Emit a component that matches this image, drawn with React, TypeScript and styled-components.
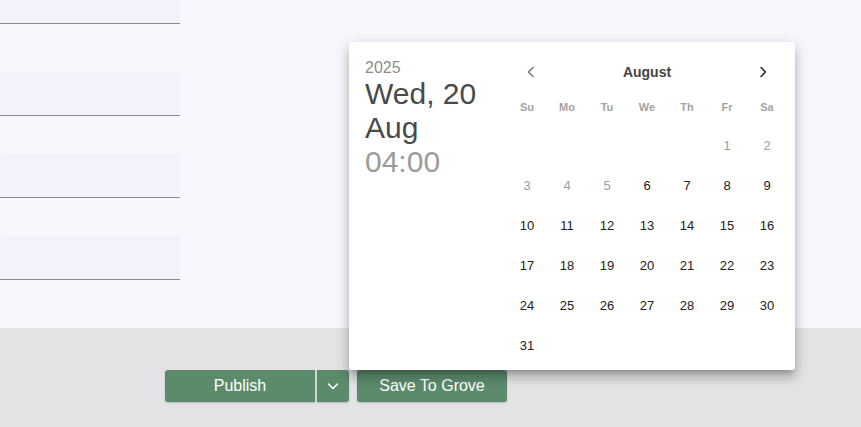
import React from "react";
import styled, { createGlobalStyle } from "styled-components";

const GlobalStyle = createGlobalStyle`
  html, body {
    margin: 0;
    padding: 0;
    background: #f7f8fe;
    font-family: "Liberation Sans", Arial, sans-serif;
  }
`;

const YEAR = 2025;
const MONTH_NAME = "August";
const FIRST_WEEKDAY = 5; // 1 Aug 2025 is a Friday
const DAYS_IN_MONTH = 31;
const FIRST_ENABLED = 6;
const WEEKDAYS = ["Su", "Mo", "Tu", "We", "Th", "Fr", "Sa"];

const Chevron = ({ dir, color }: { dir: "left" | "right" | "down"; color: string }) => {
  const d =
    dir === "left"
      ? "M9 2.5 L4.5 7 L9 11.5"
      : dir === "right"
      ? "M5 2.5 L9.5 7 L5 11.5"
      : "M2.5 5 L7 9.5 L11.5 5";
  return (
    <svg width="14" height="14" viewBox="0 0 14 14" fill="none">
      <path d={d} stroke={color} strokeWidth="1.6" strokeLinecap="round" strokeLinejoin="round" />
    </svg>
  );
};

export default function App() {
  const cells: (number | null)[] = [];
  for (let i = 0; i < FIRST_WEEKDAY; i++) cells.push(null);
  for (let d = 1; d <= DAYS_IN_MONTH; d++) cells.push(d);

  return (
    <>
      <GlobalStyle />
      <Page>
        <Main>
          <FieldColumn>
            <Field $first />
            <Field />
            <Field />
            <Field />
          </FieldColumn>
        </Main>
        <Footer>
          <SplitButton>
            <PublishButton>Publish</PublishButton>
            <MenuButton>
              <Chevron dir="down" color="#ffffff" />
            </MenuButton>
          </SplitButton>
          <SaveButton>Save To Grove</SaveButton>
        </Footer>

        <Popup>
          <DateSide>
            <Year>{YEAR}</Year>
            <DateLine>Wed, 20</DateLine>
            <DateLine>Aug</DateLine>
            <TimeLine>04:00</TimeLine>
          </DateSide>
          <Calendar>
            <MonthHeader>
              <NavButton>
                <Chevron dir="left" color="#7a7a7a" />
              </NavButton>
              <MonthName>{MONTH_NAME}</MonthName>
              <NavButton>
                <Chevron dir="right" color="#333333" />
              </NavButton>
            </MonthHeader>
            <Grid>
              {WEEKDAYS.map((w) => (
                <Weekday key={w}>{w}</Weekday>
              ))}
            </Grid>
            <DayGrid>
              {cells.map((d, i) => (
                <Day key={i} $disabled={d !== null && d < FIRST_ENABLED}>
                  {d ?? ""}
                </Day>
              ))}
            </DayGrid>
          </Calendar>
        </Popup>
      </Page>
    </>
  );
}

const Page = styled.div`
  position: relative;
  width: 861px;
  height: 427px;
  overflow: hidden;
  display: flex;
  flex-direction: column;
`;

const Main = styled.div`
  height: 328px;
  background: #f7f8fe;
`;

const FieldColumn = styled.div`
  display: flex;
  flex-direction: column;
  gap: 38px;
  width: 180px;
`;

const Field = styled.div<{ $first?: boolean }>`
  height: 43px;
  background: #f1f2fc;
  border-bottom: 1px solid #8a8a94;
  border-radius: 4px 4px 0 0;
  margin-top: ${({ $first }) => ($first ? "-20px" : "0")};
  margin-bottom: ${({ $first }) => ($first ? "10px" : "0")};
`;

const Footer = styled.div`
  flex: 1;
  background: #e3e3e6;
  display: flex;
  align-items: flex-start;
  gap: 8px;
  padding: 42px 0 0 165px;
`;

const SplitButton = styled.div`
  display: flex;
  gap: 2px;
`;

const GreenButton = styled.button`
  height: 32px;
  border: none;
  background: #5c8b6c;
  color: #ffffff;
  font-family: "Liberation Sans", Arial, sans-serif;
  font-size: 16px;
  display: flex;
  align-items: center;
  justify-content: center;
  padding: 0;
  box-shadow: 0 1px 2px rgba(0, 0, 0, 0.2);
  cursor: pointer;
`;

const PublishButton = styled(GreenButton)`
  width: 150px;
  border-radius: 3px 0 0 3px;
`;

const MenuButton = styled(GreenButton)`
  width: 32px;
  border-radius: 0 3px 3px 0;
`;

const SaveButton = styled(GreenButton)`
  width: 150px;
  border-radius: 3px;
`;

const Popup = styled.div`
  position: absolute;
  left: 349px;
  top: 42px;
  width: 446px;
  height: 328px;
  background: #ffffff;
  border-radius: 3px;
  box-shadow: 0 5px 5px -3px rgba(0, 0, 0, 0.2), 0 8px 10px 1px rgba(0, 0, 0, 0.14),
    0 3px 14px 2px rgba(0, 0, 0, 0.12);
  display: flex;
`;

const DateSide = styled.div`
  width: 158px;
  box-sizing: border-box;
  padding: 16px 0 0 16px;
  display: flex;
  flex-direction: column;
`;

const Year = styled.div`
  font-size: 16px;
  line-height: 19px;
  color: #8c8c8c;
`;

const DateLine = styled.div`
  font-size: 30px;
  line-height: 34px;
  color: #4a4a4a;
`;

const TimeLine = styled(DateLine)`
  color: #9b9b9b;
`;

const Calendar = styled.div`
  width: 280px;
  padding-top: 10px;
  display: flex;
  flex-direction: column;
`;

const MonthHeader = styled.div`
  height: 40px;
  display: flex;
  align-items: center;
  justify-content: space-between;
  padding: 0 17px;
`;

const NavButton = styled.div`
  width: 14px;
  height: 14px;
  display: flex;
  align-items: center;
  justify-content: center;
`;

const MonthName = styled.div`
  font-size: 14px;
  font-weight: bold;
  color: #444444;
`;

const Grid = styled.div`
  display: grid;
  grid-template-columns: repeat(7, 40px);
  margin-top: 5px;
`;

const Weekday = styled.div`
  height: 20px;
  display: flex;
  align-items: center;
  justify-content: center;
  font-size: 11px;
  font-weight: bold;
  color: #a3a3a3;
`;

const DayGrid = styled.div`
  display: grid;
  grid-template-columns: repeat(7, 40px);
  grid-auto-rows: 40px;
  margin-top: 8px;
`;

const Day = styled.div<{ $disabled?: boolean }>`
  display: flex;
  align-items: center;
  justify-content: center;
  font-size: 13px;
  color: ${({ $disabled }) => ($disabled ? "#9e9e9e" : "#222222")};
`;
